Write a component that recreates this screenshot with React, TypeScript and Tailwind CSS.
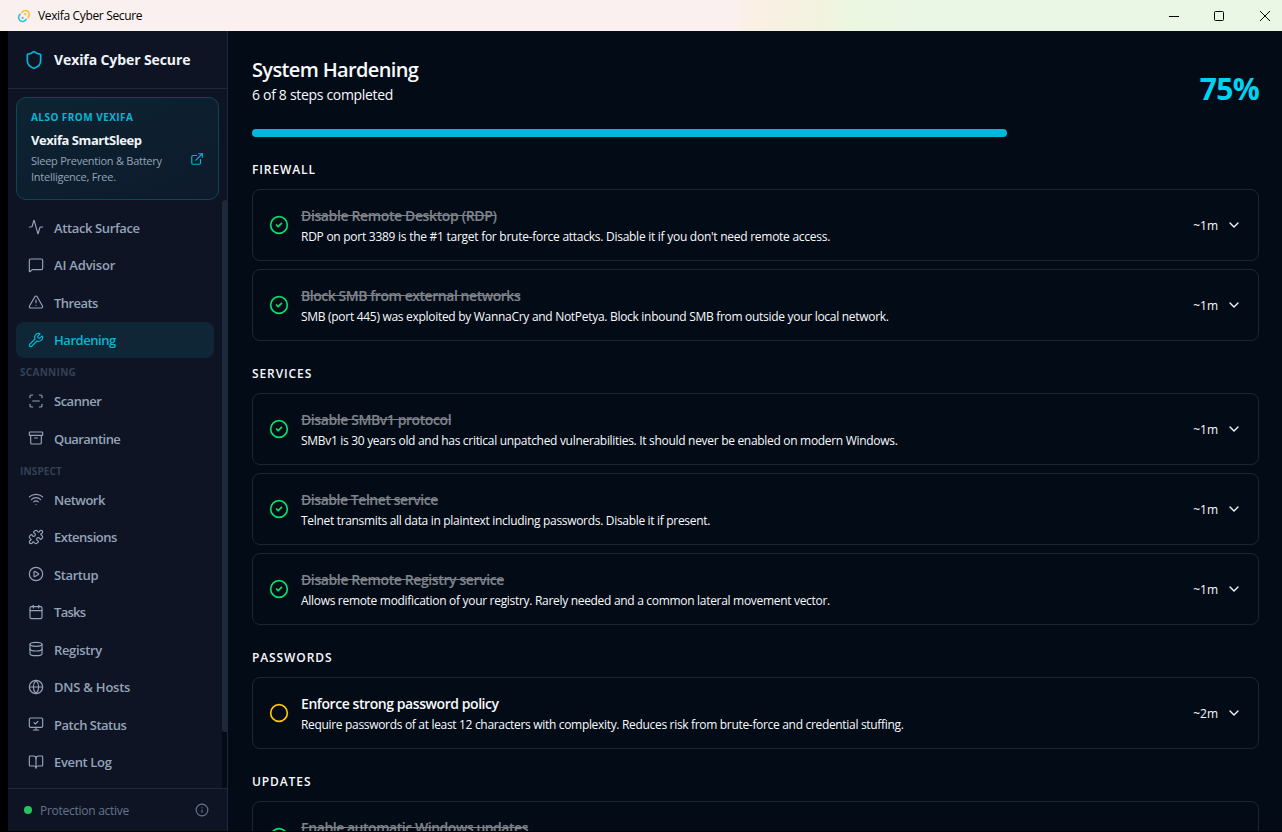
import type { ReactNode } from 'react';
import {
    Activity, Archive, BookOpen, Calendar, ChevronDown, Circle, CircleCheck, CirclePlay, Database, ExternalLink,
    Globe, Info, MessageSquare, MonitorCheck, Puzzle, ScanLine, Shield, TriangleAlert, Wifi, Wrench,
    type LucideIcon,
} from 'lucide-react';

interface NavEntry {
    label: string;
    icon: LucideIcon;
    tracking: string;
    active?: boolean;
}

interface Step {
    title: string;
    description: string;
    time: string;
    done: boolean;
    titleTracking: string;
    descTracking: string;
}

const mainNav: NavEntry[] = [
    { label: 'Attack Surface', icon: Activity, tracking: 'tracking-[-0.38px]' },
    { label: 'AI Advisor', icon: MessageSquare, tracking: 'tracking-[-0.2px]' },
    { label: 'Threats', icon: TriangleAlert, tracking: 'tracking-[-0.55px]' },
    { label: 'Hardening', icon: Wrench, tracking: 'tracking-[-0.45px]', active: true },
];

const scanningNav: NavEntry[] = [
    { label: 'Scanner', icon: ScanLine, tracking: 'tracking-[-0.5px]' },
    { label: 'Quarantine', icon: Archive, tracking: 'tracking-[-0.57px]' },
];

const inspectNav: NavEntry[] = [
    { label: 'Network', icon: Wifi, tracking: 'tracking-[-0.5px]' },
    { label: 'Extensions', icon: Puzzle, tracking: 'tracking-[-0.5px]' },
    { label: 'Startup', icon: CirclePlay, tracking: 'tracking-[-0.4px]' },
    { label: 'Tasks', icon: Calendar, tracking: 'tracking-[-0.7px]' },
    { label: 'Registry', icon: Database, tracking: 'tracking-[-0.35px]' },
    { label: 'DNS & Hosts', icon: Globe, tracking: 'tracking-[-0.23px]' },
    { label: 'Patch Status', icon: MonitorCheck, tracking: 'tracking-[-0.5px]' },
    { label: 'Event Log', icon: BookOpen, tracking: 'tracking-[-0.35px]' },
];

const sections: { name: string; steps: Step[] }[] = [
    {
        name: 'Firewall',
        steps: [
            {
                title: 'Disable Remote Desktop (RDP)',
                description: "RDP on port 3389 is the #1 target for brute-force attacks. Disable it if you don't need remote access.",
                time: '~1m', done: true, titleTracking: 'tracking-[-0.37px]', descTracking: 'tracking-[-0.265px]',
            },
            {
                title: 'Block SMB from external networks',
                description: 'SMB (port 445) was exploited by WannaCry and NotPetya. Block inbound SMB from outside your local network.',
                time: '~1m', done: true, titleTracking: 'tracking-[-0.45px]', descTracking: 'tracking-[-0.295px]',
            },
        ],
    },
    {
        name: 'Services',
        steps: [
            {
                title: 'Disable SMBv1 protocol',
                description: 'SMBv1 is 30 years old and has critical unpatched vulnerabilities. It should never be enabled on modern Windows.',
                time: '~1m', done: true, titleTracking: 'tracking-[-0.41px]', descTracking: 'tracking-[-0.305px]',
            },
            {
                title: 'Disable Telnet service',
                description: 'Telnet transmits all data in plaintext including passwords. Disable it if present.',
                time: '~1m', done: true, titleTracking: 'tracking-[-0.45px]', descTracking: 'tracking-[-0.315px]',
            },
            {
                title: 'Disable Remote Registry service',
                description: 'Allows remote modification of your registry. Rarely needed and a common lateral movement vector.',
                time: '~1m', done: true, titleTracking: 'tracking-[-0.39px]', descTracking: 'tracking-[-0.305px]',
            },
        ],
    },
    {
        name: 'Passwords',
        steps: [
            {
                title: 'Enforce strong password policy',
                description: 'Require passwords of at least 12 characters with complexity. Reduces risk from brute-force and credential stuffing.',
                time: '~2m', done: false, titleTracking: 'tracking-[-0.43px]', descTracking: 'tracking-[-0.32px]',
            },
        ],
    },
    {
        name: 'Updates',
        steps: [
            {
                title: 'Enable automatic Windows updates',
                description: 'Unpatched systems are the most common entry point for attackers.',
                time: '~1m', done: true, titleTracking: 'tracking-[-0.46px]', descTracking: 'tracking-[-0.3px]',
            },
        ],
    },
];

/** Two interlocking rings used as the window icon */
function AppLogo() {
    return (
        <svg width="14" height="14" viewBox="0 0 14 14" fill="none" className="shrink-0">
            <path d="M4.6 4.2A4 4 0 1 1 10.4 9" stroke="#fbbf3a" strokeWidth="1.6" />
            <path d="M9.4 9.8A4 4 0 1 1 3.6 5" stroke="#2cc4dc" strokeWidth="1.6" />
            <circle cx="8.3" cy="5.2" r="1.1" fill="#fbbf3a" />
            <circle cx="5.6" cy="8.8" r="1.1" fill="#2cc4dc" />
        </svg>
    );
}

function TitleBar() {
    return (
        <header className="flex h-[31px] shrink-0 items-center justify-between bg-[linear-gradient(90deg,#faf0ef_57%,#faf0e4_59%,#f2f3df_64%,#ebf7e1_67%,#ebf7e5_72%)] pl-[17px] pr-[11px] text-black">
            <div className="flex items-center gap-[7px]">
                <AppLogo />
                <span className="pt-px text-xs tracking-[-0.35px]">Vexifa Cyber Secure</span>
            </div>
            <svg width="102" height="10" viewBox="0 0 102 10" fill="none" stroke="#000">
                <path d="M0 5.5h10" />
                <rect x="45.5" y="0.5" width="9" height="9" rx="1" />
                <path d="M91 0l10 10M101 0l-10 10" />
            </svg>
        </header>
    );
}

function NavItem({ item }: { item: NavEntry }) {
    const Icon = item.icon;
    return (
        <a
            className={`flex h-[35.5px] shrink-0 items-center gap-2.5 rounded-lg px-3 text-[13px] font-semibold ${
                item.active ? 'bg-[#0e2636] text-[#06b6d4]' : 'text-[#94a3b8]'
            }`}
        >
            <Icon size={16} strokeWidth={1.75} />
            <span className={`pt-0.5 ${item.tracking}`}>{item.label}</span>
        </a>
    );
}

function NavLabel({ children, tracking }: { children: ReactNode; tracking: string }) {
    return (
        <div className={`flex h-[21.5px] shrink-0 items-center px-1 pt-[5px] text-[10px] font-bold uppercase text-[#334155] ${tracking}`}>
            {children}
        </div>
    );
}

function PromoCard() {
    return (
        <div className="mx-2 mt-2 flex h-[103px] w-[203px] shrink-0 items-center justify-between rounded-[10px] border border-[#0c4657] bg-linear-to-br from-[#0d2433] to-[#0d1a2b] px-3.5">
            <div className="pb-[3px]">
                <p className="text-[10px] font-bold uppercase leading-4 tracking-[0.45px] text-[#06b6d4]">Also from Vexifa</p>
                <p className="mt-[5px] text-[13px] font-bold leading-5 tracking-[-0.43px] text-slate-100">Vexifa SmartSleep</p>
                <p className="mt-[3px] w-[150px] text-[11px] leading-4 tracking-[-0.26px] text-[#94a3b8]">
                    Sleep Prevention &amp; Battery
                    <br />
                    Intelligence, Free.
                </p>
            </div>
            <ExternalLink size={14} className="mt-5 shrink-0 text-[#06b6d4]" />
        </div>
    );
}

function Sidebar() {
    return (
        <aside className="flex w-[220px] shrink-0 flex-col border-r border-[#1e293b] bg-[#0e1424]">
            <div className="flex h-[58px] shrink-0 items-center gap-2.5 border-b border-[#1e293b] px-4">
                <Shield size={20} strokeWidth={2} className="text-[#06b6d4]" />
                <span className="pt-px text-sm font-bold tracking-[-0.1px] text-slate-100">Vexifa Cyber Secure</span>
            </div>
            <PromoCard />
            <div className="flex min-h-0 flex-1">
                <nav className="flex min-w-0 flex-1 flex-col gap-0.5 overflow-hidden px-2 pt-[9.5px]">
                    {mainNav.map((item) => <NavItem key={item.label} item={item} />)}
                    <NavLabel tracking="tracking-[0.3px]">Scanning</NavLabel>
                    {scanningNav.map((item) => <NavItem key={item.label} item={item} />)}
                    <NavLabel tracking="tracking-[0.15px]">Inspect</NavLabel>
                    {inspectNav.map((item) => <NavItem key={item.label} item={item} />)}
                </nav>
                <div className="w-[5px] bg-[#030b17]">
                    <div className="h-[532px] w-1.5 rounded-[3px] bg-[#1e293b]" />
                </div>
            </div>
            <footer className="flex h-[43px] shrink-0 items-center border-t border-[#1e293b] pl-4 pr-[18px] text-[#64748b]">
                <span className="mr-2 size-2 rounded-full bg-[#22c55e]" />
                <span className="flex-1 pt-0.5 text-xs tracking-[-0.27px]">Protection active</span>
                <Info size={14} />
            </footer>
        </aside>
    );
}

function StepCard({ step }: { step: Step }) {
    return (
        <div className="flex h-[72px] shrink-0 items-center gap-3 rounded-lg border border-[#1b2635] px-4">
            {step.done
                ? <CircleCheck size={20} className="shrink-0 text-[#05df72]" />
                : <Circle size={20} className="shrink-0 text-[#fdc700]" />}
            <div className="min-w-0 flex-1 pt-0.5">
                <p className={`text-sm font-semibold leading-5 ${step.titleTracking} ${step.done ? 'line-through opacity-50' : ''}`}>
                    {step.title}
                </p>
                <p className={`mt-0.5 text-xs leading-[18px] ${step.descTracking}`}>{step.description}</p>
            </div>
            <div className="flex items-center gap-2 text-xs">
                <span className="pt-0.5">{step.time}</span>
                <ChevronDown size={16} />
            </div>
        </div>
    );
}

export default function App() {
    return (
        <div className="flex h-[832px] w-[1282px] flex-col overflow-hidden bg-black font-['Open_Sans','Noto_Sans',sans-serif]">
            <TitleBar />
            <div className="flex h-[800px] pl-2">
                <Sidebar />
                <main className="flex min-w-0 flex-1 flex-col overflow-hidden bg-[#030b17] pl-6 pr-[23px] pt-6 text-slate-50">
                    <div className="flex shrink-0 items-center justify-between">
                        <div className="-mt-px pb-px">
                            <h1 className="text-xl font-semibold leading-[30px] tracking-[-0.64px]">System Hardening</h1>
                            <p className="text-sm leading-5 tracking-[-0.31px]">6 of 8 steps completed</p>
                        </div>
                        <span className="mt-4 text-3xl font-bold leading-9 tracking-[-0.7px] text-[#00d3f2]">75%</span>
                    </div>
                    <div className="mt-[22px] h-2 shrink-0">
                        <div className="h-2 w-3/4 rounded-full bg-[#00b8db]" />
                    </div>
                    {sections.map((section) => (
                        <section key={section.name} className="mb-6 flex shrink-0 flex-col gap-2 first-of-type:mt-6">
                            <h2 className="h-4 text-xs font-semibold uppercase leading-[18px] tracking-[0.9px]">{section.name}</h2>
                            <div className="mt-1 flex flex-col gap-2">
                                {section.steps.map((step) => <StepCard key={step.title} step={step} />)}
                            </div>
                        </section>
                    ))}
                </main>
            </div>
        </div>
    );
}
